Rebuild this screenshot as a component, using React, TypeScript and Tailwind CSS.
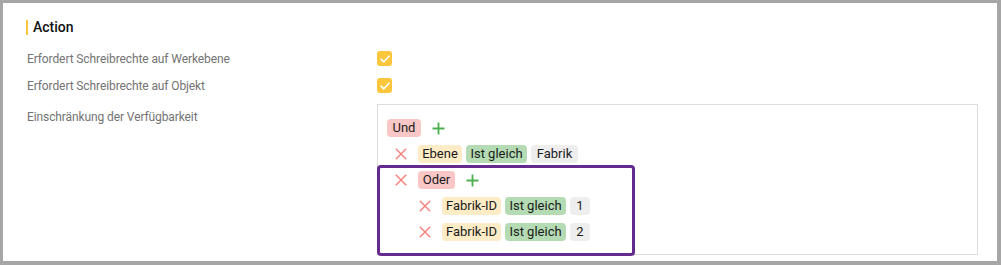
import React from "react";

const XIcon = () => (
  <svg width="12" height="12" viewBox="0 0 12 12" fill="none">
    <path d="M0.8 0.8L11.2 11.2M11.2 0.8L0.8 11.2" stroke="#f3847c" strokeWidth="1.5" />
  </svg>
);

const PlusIcon = () => (
  <svg width="13" height="13" viewBox="0 0 12 12" fill="none">
    <path d="M6 0.5V11.5M0.5 6H11.5" stroke="#4caf50" strokeWidth="1.7" />
  </svg>
);

const Check = () => (
  <div className="w-[15px] h-[15px] rounded-[3px] bg-[#fcc73d] flex items-center justify-center">
    <svg width="10" height="8" viewBox="0 0 10 8" fill="none">
      <path d="M1 4.2L3.8 6.8L9 1.2" stroke="#ffffff" strokeWidth="1.6" strokeLinecap="round" strokeLinejoin="round" />
    </svg>
  </div>
);

const Chip = ({ text, cls }: { text: string; cls: string }) => (
  <span className={`${cls} h-[18px] leading-[18px] text-center rounded-[4px] text-[13px] text-[#1a1a1a]`}>{text}</span>
);

const Cond = ({ a, aw, c, cw }: { a: string; aw: string; c: string; cw: string }) => (
  <div className="h-[26px] flex items-center">
    <div className="w-[27px] flex justify-center"><XIcon /></div>
    <div className="ml-[4px] flex items-center gap-[4px]">
      <Chip text={a} cls={`bg-[#fdecc6] ${aw}`} />
      <Chip text="Ist gleich" cls="bg-[#b4dbb3] w-[61px]" />
      <Chip text={c} cls={`bg-[#eeeeee] ${cw}`} />
    </div>
  </div>
);

export default function App() {
  return (
    <div className="w-[1001px] h-[265px] bg-[#a6a6a6] pt-[3px] pl-[3px] pr-[4px] pb-[4px]" style={{ fontFamily: "Roboto, 'Noto Sans', sans-serif" }}>
      <div className="w-full h-full bg-white pl-[24px] pt-[17px]">
        <div className="flex items-center h-[15px] ml-[-1px]">
          <div className="w-[2px] h-[15px] bg-[#fcc73d] mr-[5px]" />
          <span className="text-[14px] font-medium leading-[15px] text-[#111111]">Action</span>
        </div>
        <div className="mt-[10px] flex items-center h-[27px]">
          <div className="w-[350px] text-[12px] tracking-[-0.1px] text-[#737373]">Erfordert Schreibrechte auf Werkebene</div>
          <Check />
        </div>
        <div className="flex items-center h-[27px]">
          <div className="w-[350px] text-[12px] tracking-[-0.1px] text-[#737373]">Erfordert Schreibrechte auf Objekt</div>
          <Check />
        </div>
        <div className="mt-[5px] flex items-start">
          <div className="w-[350px] pt-[4px] text-[12px] tracking-[-0.1px] text-[#737373]">Einschränkung der Verfügbarkeit</div>
          <div className="relative w-[601px] h-[151px] border border-[#dddddd] pl-[9px] pt-[10px]">
            <div className="h-[26px] flex items-center">
              <Chip text="Und" cls="bg-[#f9c8c6] w-[34px]" />
              <div className="ml-[11px] flex"><PlusIcon /></div>
            </div>
            <Cond a="Ebene" aw="w-[44px]" c="Fabrik" cw="w-[47px]" />
            <div className="h-[26px] flex items-center">
              <div className="w-[27px] flex justify-center"><XIcon /></div>
              <div className="ml-[4px] flex items-center">
                <Chip text="Oder" cls="bg-[#f9c8c6] w-[37px]" />
                <div className="ml-[11px] flex"><PlusIcon /></div>
              </div>
            </div>
            <div className="pl-[24px]">
              <Cond a="Fabrik-ID" aw="w-[59px]" c="1" cw="w-[20px]" />
              <Cond a="Fabrik-ID" aw="w-[59px]" c="2" cw="w-[20px]" />
            </div>
            <div className="absolute left-[-1px] top-[60px] w-[258px] h-[91px] border-[3px] border-[#662a8f] rounded-[4px]" />
          </div>
        </div>
      </div>
    </div>
  );
}
